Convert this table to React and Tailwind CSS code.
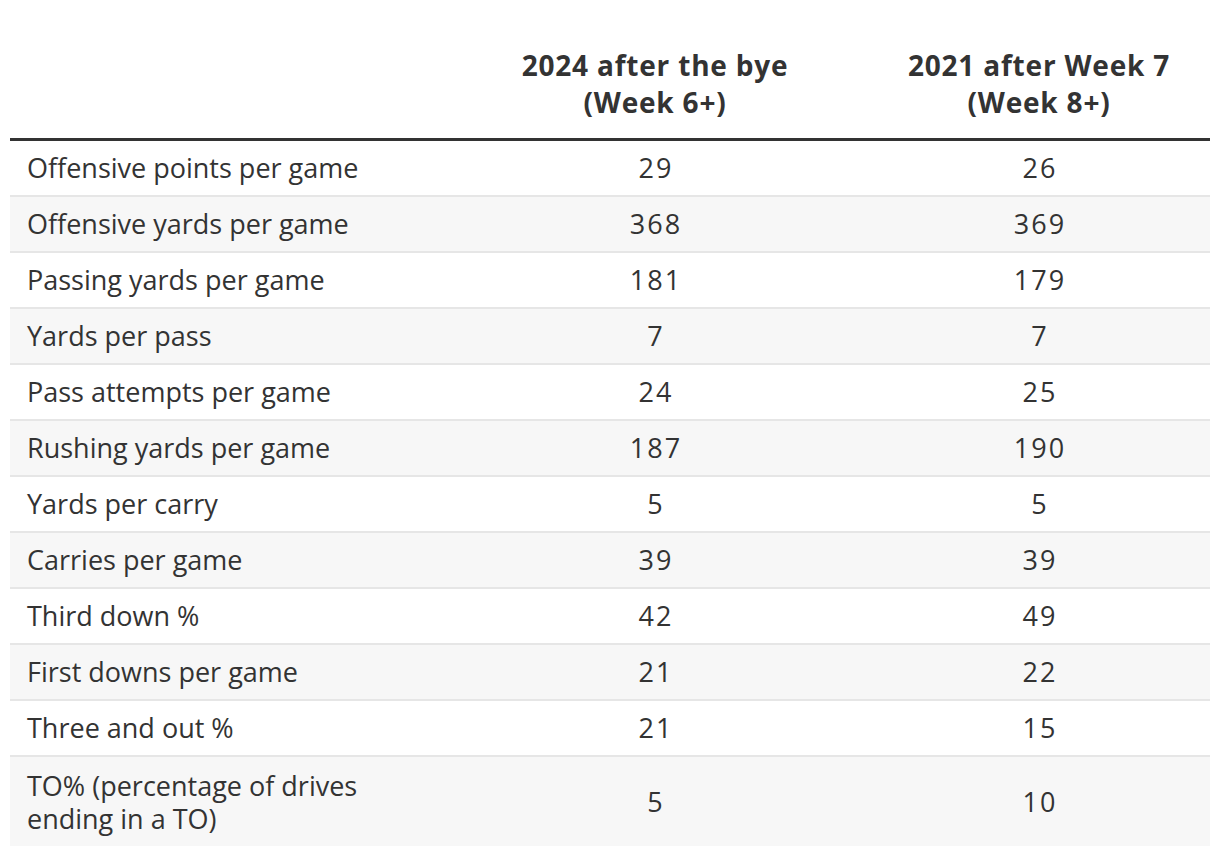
import React from 'react';

const ROWS = [
  ['Offensive points per game', '29', '26'],
  ['Offensive yards per game', '368', '369'],
  ['Passing yards per game', '181', '179'],
  ['Yards per pass', '7', '7'],
  ['Pass attempts per game', '24', '25'],
  ['Rushing yards per game', '187', '190'],
  ['Yards per carry', '5', '5'],
  ['Carries per game', '39', '39'],
  ['Third down %', '42', '49'],
  ['First downs per game', '21', '22'],
  ['Three and out %', '21', '15'],
  ['TO% (percentage of drives ending in a TO)', '5', '10'],
];

const NUM = 'w-[426px] shrink-0 text-center tracking-[2px] pl-[2px]';
const NUM3 = 'w-[342px] shrink-0 text-center tracking-[2px] pl-[2px]';

export default function App() {
  return (
    <div className="w-[1220px] h-[856px] bg-white px-[10px] text-[#333] overflow-hidden font-['Open_Sans',sans-serif]">
      {/* header */}
      <div className="flex h-[141px] items-end border-b-[3px] border-[#333] pb-[17px] font-bold text-[28px] leading-[37px] text-center tracking-[0.8px]">
        <div className="w-[432px]" />
        <div className="w-[426px]">2024 after the bye<br />(Week 6+)</div>
        <div className="w-[342px]">2021 after Week 7<br />(Week 8+)</div>
      </div>

      {ROWS.map((r, i) => {
        const last = i === ROWS.length - 1;
        return (
          <div
            key={i}
            className={`flex items-center text-[27px] ${last ? 'h-[89px] leading-[33px]' : 'h-[56px] border-b-2 border-[#e6e6e6]'} ${i % 2 === 1 ? 'bg-[#f7f7f7]' : 'bg-white'}`}
          >
            <div className={`w-[432px] shrink-0 pl-[17px] ${last ? 'pr-[60px]' : ''}`}>{r[0]}</div>
            <div className={NUM}>{r[1]}</div>
            <div className={NUM3}>{r[2]}</div>
          </div>
        );
      })}
    </div>
  );
}
